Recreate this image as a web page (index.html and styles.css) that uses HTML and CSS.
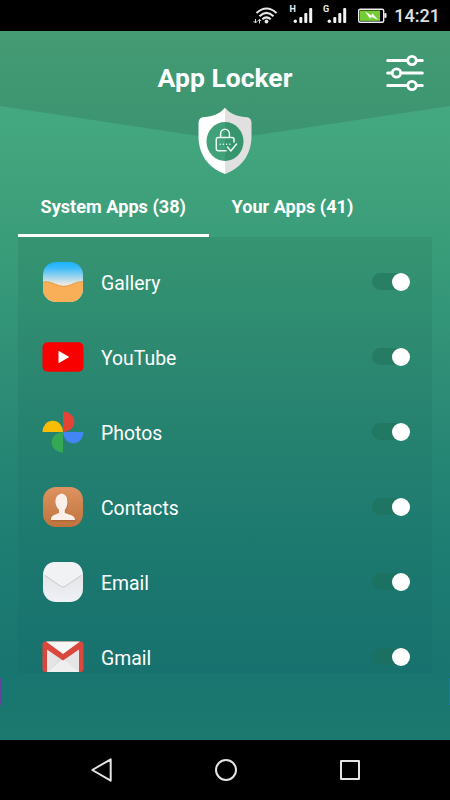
FILE: index.html
```html
<!DOCTYPE html>
<html lang="en">
<head>
    <meta charset="UTF-8">
    <title>App Locker</title>
    <link rel="stylesheet" href="styles.css">
</head>
<body>
    <div class="status-bar">
        <svg class="status-icons" width="152" height="31" viewBox="0 0 152 31">
            <g fill="none" stroke="#e8e8e8" stroke-width="2.1">
                <path d="M3.5 13 Q13.5 4 23.5 13"/>
                <path d="M6.5 16.2 Q13.5 9.6 20.5 16.2"/>
                <path d="M9.3 19.3 Q13.5 15.4 17.7 19.3"/>
            </g>
            <circle cx="13.5" cy="21.5" r="1.9" fill="#e8e8e8"/>
            <path d="M2.5 19v4M.5 21l2 2 2-2M6.5 23.5v-4M4.8 21l1.7-1.7 1.7 1.7" fill="none" stroke="#ddd" stroke-width="1"/>
            <text class="net-label" x="36.5" y="12">H</text>
            <text class="net-label" x="70" y="12">G</text>
            <g fill="#f2f2f2">
                <circle cx="42.3" cy="21.3" r="1.7"/>
                <rect x="46.3" y="17" width="3" height="6" rx="1"/>
                <rect x="51.3" y="13" width="3" height="10" rx="1"/>
                <rect x="56.2" y="8" width="3" height="15" rx="1"/>
                <circle cx="76.3" cy="21.3" r="1.7"/>
                <rect x="80.3" y="17" width="3" height="6" rx="1"/>
                <rect x="85.3" y="13" width="3" height="10" rx="1"/>
                <rect x="90.2" y="8" width="3" height="15" rx="1"/>
            </g>
            <rect x="105.7" y="9.2" width="25" height="13" rx="1.5" fill="#000" stroke="#eee" stroke-width="1.4"/>
            <rect x="107" y="10.5" width="20" height="10.4" fill="#76cc35"/>
            <rect x="131.3" y="13" width="2.2" height="5" rx="1" fill="#eee"/>
            <path d="M112 11.5l6.5 4 .8-2.2 5.7 6.4-7-3-.8 2z" fill="#fff"/>
        </svg>
        <span class="clock">14:21</span>
    </div>

    <div class="app">
        <div class="header">
            <h1>App Locker</h1>
            <svg class="settings" width="40" height="38" viewBox="0 0 40 38">
                <g fill="none" stroke="#fff" stroke-width="3" stroke-linecap="round">
                    <path d="M2.7 6.5H21M32 6.5h5.3M2.7 19H6M17 19h20.3M2.7 31.5H21M32 31.5h5.3"/>
                    <circle cx="27" cy="6.5" r="4.2" stroke-width="2.8"/>
                    <circle cx="11.5" cy="19" r="4.2" stroke-width="2.8"/>
                    <circle cx="27" cy="31.5" r="4.2" stroke-width="2.8"/>
                </g>
            </svg>
        </div>

        <div class="shield">
            <svg width="54" height="68" viewBox="0 0 54 68">
                <path d="M27 .7C23 5 18 9.5 5 10.2Q.7 10.7.5 16V29C.5 45 8 60 27 67z" fill="#fff"/>
                <path d="M27 .7C31 5 36 9.5 49 10.2Q53.3 10.7 53.5 16V29C53.5 45 46 60 27 67z" fill="#e0e0e0"/>
                <path d="M27 15a18.5 19.5 0 0 0 0 39z" fill="#41a279"/>
                <path d="M27 15a18.5 19.5 0 0 1 0 39z" fill="#38966f"/>
                <g fill="none" stroke="#e9fff6" stroke-width="1.5" stroke-linecap="round" stroke-linejoin="round">
                    <path d="M22.6 30.3V26.6a4.4 4.4 0 0 1 8.8 0V30.3"/>
                    <path d="M28 43.7H20.3a2 2 0 0 1-2-2V32.6a2 2 0 0 1 2-2H34a2 2 0 0 1 2 2V35"/>
                    <path d="M29.5 40l3.3 4 5.7-7"/>
                    <path d="M22.2 37.2h.1M25.4 37.2h.1M28.6 37.2h.1M31.8 37.2h.1" stroke-width="1.4"/>
                </g>
            </svg>
        </div>

        <div class="tabs">
            <div class="tab active">System Apps (38)</div>
            <div class="tab">Your Apps (41)</div>
        </div>

        <div class="app-list">
            <div class="app-row">
                <svg class="icon" viewBox="0 0 42 42">
                    <defs>
                        <linearGradient id="sky" x1="0" y1="0" x2="0" y2="1">
                            <stop offset="0" stop-color="#19b0ff"/>
                            <stop offset=".15" stop-color="#35b9fa"/>
                            <stop offset=".55" stop-color="#e9e9e4"/>
                        </linearGradient>
                        <clipPath id="tile"><rect x="1" y="1" width="40" height="40" rx="13"/></clipPath>
                    </defs>
                    <g clip-path="url(#tile)">
                        <rect width="42" height="42" fill="url(#sky)"/>
                        <path d="M0 21.5C8 18.5 14 25.5 22 25.3S34 19.5 42 21V42H0z" fill="#f8af57"/>
                        <path d="M0 21.5C8 18.5 14 25.5 22 25.3S34 19.5 42 21" fill="none" stroke="#e69a43" stroke-width="1"/>
                    </g>
                </svg>
                <span class="name">Gallery</span>
                <span class="toggle"></span>
            </div>
            <div class="app-row">
                <svg class="icon" viewBox="0 0 42 42">
                    <rect x=".5" y="6.3" width="41" height="29.4" rx="5" fill="#f80000"/>
                    <path d="M16.5 14.8v12.4L27.3 21z" fill="#fff"/>
                </svg>
                <span class="name">YouTube</span>
                <span class="toggle"></span>
            </div>
            <div class="app-row">
                <svg class="icon" viewBox="0 0 42 42">
                    <path d="M21 .5A11.3 10.25 0 0 1 21 21z" fill="#e64335"/>
                    <path d="M.5 21A10.25 11.3 0 0 1 21 21z" fill="#fbbc05"/>
                    <path d="M21 21H41.5A10.25 11.3 0 0 1 21 21z" fill="#4285f4"/>
                    <path d="M21 21V41.5A11.3 10.25 0 0 1 21 21z" fill="#34a853"/>
                </svg>
                <span class="name">Photos</span>
                <span class="toggle"></span>
            </div>
            <div class="app-row">
                <svg class="icon" viewBox="0 0 42 42">
                    <defs>
                        <linearGradient id="copper" x1="0" y1="0" x2="0" y2="1">
                            <stop offset="0" stop-color="#de9360"/>
                            <stop offset="1" stop-color="#bf733d"/>
                        </linearGradient>
                    </defs>
                    <rect x="1" y="1" width="40" height="40" rx="13" fill="url(#copper)"/>
                    <path d="M9 34.8C8.8 29 13 29.3 17 27.5V24C13.7 20.5 12.6 16 14 12 15 9 17 8.6 19.3 8 23 8 25.5 10.6 25.3 15 25.8 18.5 24.5 22 22.8 24V27.5C27 29.3 33 29 33 34.8z" fill="#8c4d21" opacity=".35" transform="translate(.6 .8)"/>
                    <path d="M9 34C8.8 29 13 28.8 17 27V24C13.7 20.5 12.6 16 14 12 15 9 17 8.4 19.3 7.5 23 8 25.5 10.6 25.3 15 25.8 18.5 24.5 22 22.8 24V27C27 28.8 33 29 33 34z" fill="#fbf0e9"/>
                </svg>
                <span class="name">Contacts</span>
                <span class="toggle"></span>
            </div>
            <div class="app-row">
                <svg class="icon" viewBox="0 0 42 42">
                    <defs>
                        <linearGradient id="paper" x1="0" y1="0" x2="0" y2="1">
                            <stop offset="0" stop-color="#dcdfe2"/>
                            <stop offset="1" stop-color="#f0f1f6"/>
                        </linearGradient>
                    </defs>
                    <rect x="1" y="1" width="40" height="40" rx="13" fill="url(#paper)"/>
                    <path d="M1.5 13C2 5 6 1 14 1H28c8 0 12 4 12.5 12L21 26.5z" fill="#f1f2f4"/>
                    <path d="M3 14.5L19 25.5q2 1.3 4 0L39 14.5" fill="none" stroke="#c6c9cd" stroke-width="1"/>
                </svg>
                <span class="name">Email</span>
                <span class="toggle"></span>
            </div>
            <div class="app-row">
                <svg class="icon" viewBox="0 0 42 42">
                    <rect x=".5" y="5.5" width="41" height="30.5" rx="3" fill="#da483d"/>
                    <path d="M5 12h32v24H5z" fill="#e6e4e4"/>
                    <path d="M21 23L37 36H5z" fill="#efefef"/>
                    <path d="M12 26l7-2.5L6.5 35" fill="none" stroke="#d8d8d8" stroke-width=".7"/>
                    <path d="M2 11.5l19 13 19-13V7H2z" fill="#da483d"/>
                    <path d="M4 5.5h34L21 18z" fill="#f6f6f4"/>
                </svg>
                <span class="name">Gmail</span>
                <span class="toggle"></span>
            </div>
        </div>

        <div class="page-edges">
            <span class="edge left"></span>
            <span class="edge right"></span>
        </div>
    </div>

    <div class="nav-bar">
        <svg width="24" height="24" viewBox="0 0 24 24"><path d="M2.3 12L20.7 1.3V22.7z"/></svg>
        <svg width="24" height="24" viewBox="0 0 24 24"><circle cx="12" cy="12" r="10"/></svg>
        <svg width="24" height="24" viewBox="0 0 24 24"><rect x="3" y="3" width="18" height="18"/></svg>
    </div>
</body>
</html>
```

FILE: styles.css
```css
* {
    margin: 0;
    padding: 0;
    box-sizing: border-box;
    font-family: Roboto, sans-serif;
}

body {
    height: 800px;
    width: 450px;
    overflow: hidden;
    display: flex;
    flex-direction: column;
    background-color: #000;
    color: #fff;
}

.status-bar {
    height: 31px;
    padding-right: 10px;
    display: flex;
    align-items: center;
    justify-content: flex-end;
    background-color: #000;
}

.status-icons {
    margin-right: -11px;
}

.clock {
    font-size: 18px;
    font-weight: 500;
    line-height: 31px;
    color: #e0e0e0;
}

.net-label {
    font-size: 9px;
    font-weight: bold;
    fill: #eee;
}

.app {
    position: relative;
    height: 709px;
    display: flex;
    flex-direction: column;
    background: linear-gradient(#49aa80 0, #43a77f 90px, #40a27c 150px, #389b79 230px, #2c8c76 360px, #1f7f73 500px, #187570 640px, #1b796f 709px);
}

/* darker chevron behind the title */
.app::before {
    content: "";
    position: absolute;
    inset: 0 0 auto 0;
    height: 109px;
    background: linear-gradient(#449b74, #3b9470);
    clip-path: polygon(0 0, 100% 0, 100% 75px, 50% 109px, 0 75px);
}

.header {
    position: relative;
    height: 76px;
    padding: 17px 25px 0;
    display: grid;
    grid-template-columns: 40px 1fr 40px;
    align-items: start;
}

.header h1 {
    grid-column: 2;
    font-size: 26.5px;
    line-height: 59px;
    text-align: center;
}

.settings {
    margin-top: 6px;
}

.shield {
    position: relative;
    height: 69px;
    display: flex;
    justify-content: center;
}

.tabs {
    height: 61px;
    padding-left: 18px;
    display: flex;
}

.tab {
    padding: 0 22.5px;
    font-size: 18.15px;
    font-weight: bold;
    line-height: 61px;
    white-space: nowrap;
}

.tab.active {
    width: 191px;
    border-bottom: 3px solid #fff;
}

.app-list {
    height: 436px;
    margin: 0 18px;
    padding: 7px 22px 0 24px;
    overflow: hidden;
    background: linear-gradient(rgba(0, 40, 20, 0.08), rgba(0, 60, 80, 0.06));
}

.app-row {
    height: 75px;
    display: flex;
    align-items: center;
}

.icon {
    width: 42px;
    height: 42px;
}

.name {
    flex: 1;
    padding-top: 3px;
    margin-left: 17px;
    font-size: 19.4px;
}

.toggle {
    width: 38px;
    height: 17px;
    display: flex;
    align-items: center;
    justify-content: flex-end;
    border-radius: 9px;
    background-color: rgba(30, 110, 85, 0.5);
}

.toggle::after {
    content: "";
    width: 18px;
    height: 18px;
    flex-shrink: 0;
    border-radius: 50%;
    background-color: #fff;
}

.page-edges {
    padding-top: 5px;
    display: flex;
    justify-content: space-between;
}

.edge {
    width: 2px;
    height: 27px;
    background-color: #5f489c;
}

.edge.right {
    width: 1px;
    background-color: #1f70c8;
}

.nav-bar {
    height: 60px;
    padding: 0 88px 0 90px;
    display: flex;
    align-items: center;
    justify-content: space-between;
    background-color: #000;
}

.nav-bar svg {
    fill: none;
    stroke: #e4e4e4;
    stroke-width: 2;
    stroke-linejoin: round;
}
```
